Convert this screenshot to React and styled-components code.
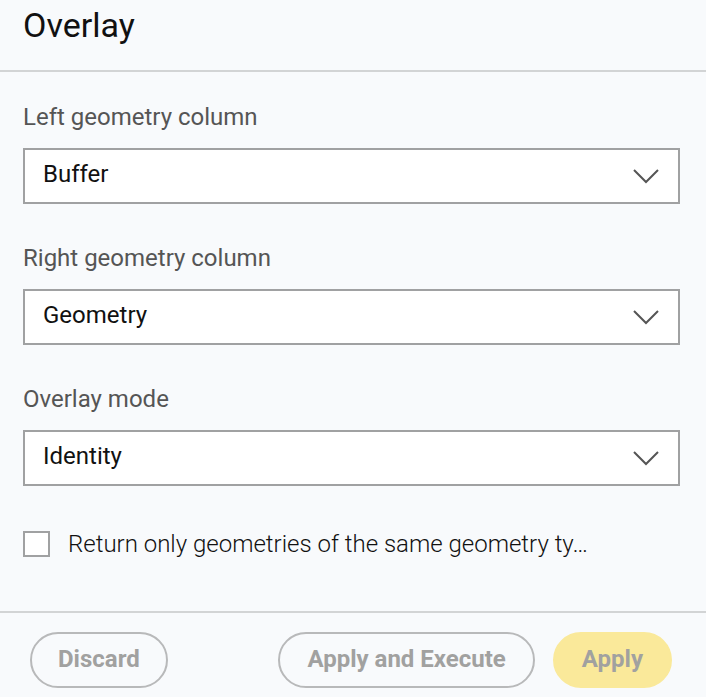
import React from "react";
import styled, { createGlobalStyle } from "styled-components";

const Global = createGlobalStyle`
  *, *::before, *::after { box-sizing: border-box; }
  body { margin: 0; background: #f8fafc; font-family: Roboto, "Liberation Sans", sans-serif; }
`;

const Dialog = styled.form`
  display: flex;
  flex-direction: column;
  background: #f8fafc;
`;

const Header = styled.header`
  padding: 4px 23px 24px;
  border-bottom: 2px solid #d2d4d5;
`;

const Title = styled.h1`
  margin: 0;
  font-size: 34px;
  line-height: 42px;
  font-weight: 400;
  color: #111;
`;

const Body = styled.div`
  display: flex;
  flex-direction: column;
  gap: 40px;
  padding: 31px 26px 53px 23px;
`;

const Field = styled.div`
  display: flex;
  flex-direction: column;
  gap: 17px;
`;

const Label = styled.label`
  font-size: 24px;
  line-height: 28px;
  color: #555;
`;

const SelectBox = styled.div`
  display: grid;
  align-items: center;
  height: 56px;
  background: #fff;
  border: 2px solid #a0a1a2;

  > * { grid-area: 1 / 1; }
`;

const Select = styled.select`
  appearance: none;
  width: 100%;
  height: 100%;
  padding: 0 60px 4px 18px;
  border: 0;
  background: transparent;
  font: 400 24px/28px Roboto, "Liberation Sans", sans-serif;
  color: #111;
`;

const Chevron = styled.svg`
  justify-self: end;
  width: 28px;
  height: 16px;
  margin-right: 18px;
  pointer-events: none;
`;

const CheckRow = styled.label`
  display: flex;
  align-items: center;
  gap: 18px;
  margin-top: 4px;
  font-size: 24px;
  line-height: 28px;
  font-weight: 300;
  color: #111;
`;

const Checkbox = styled.input`
  appearance: none;
  flex: none;
  width: 27px;
  height: 26px;
  margin: 0;
  border: 2px solid #a0a1a2;
  background: #fff;

  &:checked { background: #fae99a; }
`;

const Footer = styled.footer`
  display: flex;
  align-items: center;
  gap: 18px;
  padding: 19px 34px 9px 30px;
  border-top: 2px solid #d2d4d5;
`;

const Button = styled.button`
  height: 56px;
  padding: 0 27px 2px;
  border: 2px solid ${(p) => (p.$primary ? "#fae99a" : "#b8b9ba")};
  border-radius: 28px;
  background: ${(p) => (p.$primary ? "#fae99a" : "transparent")};
  font: 700 24px/28px Roboto, "Liberation Sans", sans-serif;
  color: #a1a1a0;
  white-space: nowrap;

  &:first-child {
    margin-right: auto;
    padding: 0 26px 2px;
  }
`;

const fields = [
  { id: "left", label: "Left geometry column", value: "Buffer" },
  { id: "right", label: "Right geometry column", value: "Geometry" },
  { id: "mode", label: "Overlay mode", value: "Identity" },
];

export default function App() {
  return (
    <>
      <Global />
      <Dialog>
        <Header><Title>Overlay</Title></Header>
        <Body>
          {fields.map((f) => (
            <Field key={f.id}>
              <Label htmlFor={f.id}>{f.label}</Label>
              <SelectBox>
                <Select id={f.id} defaultValue={f.value}><option>{f.value}</option></Select>
                <Chevron viewBox="0 0 28 16" fill="none" stroke="#555" strokeWidth="2" aria-hidden="true">
                  <path d="M2 2l12 12L26 2" />
                </Chevron>
              </SelectBox>
            </Field>
          ))}
          <CheckRow>
            <Checkbox type="checkbox" />
            <span>Return only geometries of the same geometry ty…</span>
          </CheckRow>
        </Body>
        <Footer>
          <Button type="button">Discard</Button>
          <Button type="button">Apply and Execute</Button>
          <Button type="button" $primary>Apply</Button>
        </Footer>
      </Dialog>
    </>
  );
}
